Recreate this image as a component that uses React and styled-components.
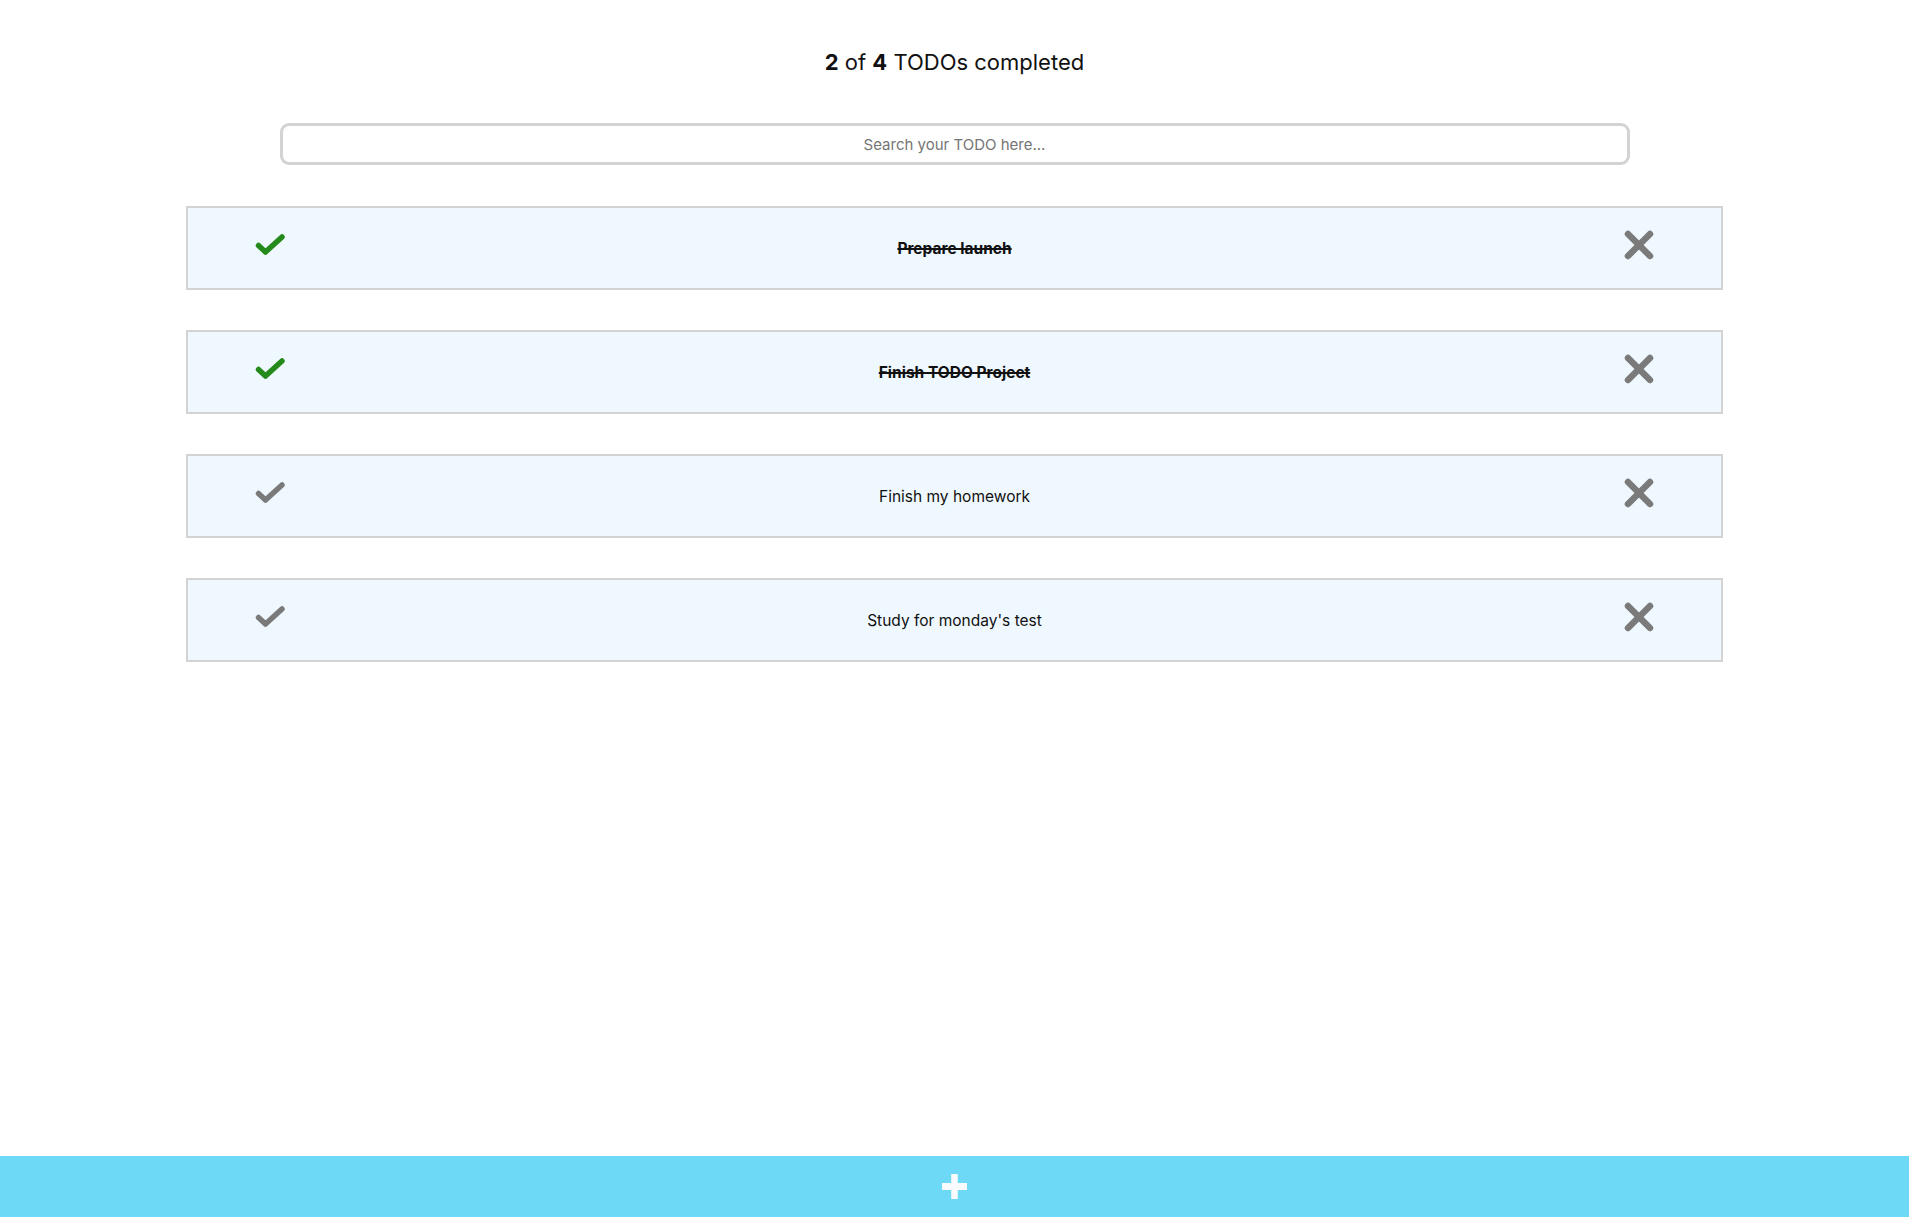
import React, { useState } from "react";
import styled, { createGlobalStyle } from "styled-components";

const GlobalStyle = createGlobalStyle`
  html, body { margin: 0; padding: 0; background: #ffffff; }
  body { font-family: Inter, "Noto Sans", "Liberation Sans", sans-serif; color: #111; }
  * { box-sizing: border-box; }
`;

const Page = styled.div`
  min-height: 1217px;
  padding-bottom: 80px;
`;

const Title = styled.h1`
  margin: 0;
  padding-top: 48px;
  font-size: 22px;
  line-height: 28px;
  font-weight: 400;
  text-align: center;
  color: #111;
  b { font-weight: 700; }
`;

const SearchInput = styled.input`
  display: block;
  margin: 47px auto 0;
  width: 1350px;
  height: 42px;
  border: 3px solid #d3d3d3;
  border-radius: 9px;
  background: #fff;
  text-align: center;
  font-family: Inter, "Noto Sans", "Liberation Sans", sans-serif;
  font-size: 15px;
  color: #333;
  outline: none;
  &::placeholder { color: #757575; }
`;

const List = styled.ul`
  list-style: none;
  margin: 41px auto 0;
  padding: 0;
  width: 1537px;
  display: flex;
  flex-direction: column;
  gap: 40px;
`;

const Item = styled.li`
  display: flex;
  align-items: center;
  height: 84px;
  padding: 0 67px;
  border: 2px solid #d3d3d3;
  background: #f0f8ff;
`;

const IconButton = styled.span`
  width: 30px;
  height: 30px;
  display: flex;
  align-items: center;
  justify-content: center;
  margin-top: -6px;
  cursor: pointer;
  svg { display: block; }
`;

const Text = styled.p`
  flex: 1;
  margin: 2px 0 0;
  text-align: center;
  font-size: 15.5px;
  line-height: 20px;
  color: #111;
  font-weight: ${(p) => (p.$done ? 700 : 400)};
  text-decoration: ${(p) => (p.$done ? "line-through" : "none")};
  text-decoration-thickness: 1.5px;
`;

const Footer = styled.button`
  position: fixed;
  left: 0;
  right: 0;
  bottom: 0;
  height: 61px;
  border: none;
  background: #6ed8f7;
  display: flex;
  align-items: center;
  justify-content: center;
  cursor: pointer;
  padding: 0;
`;

const CheckIcon = ({ done }) => (
  <svg width="30" height="22" viewBox="0 0 30 22">
    <polyline
      points="3.5,11.5 10.5,18 27,3"
      fill="none"
      stroke={done ? "#238a1b" : "#7a7a7a"}
      strokeWidth="5.5"
      strokeLinecap="round"
      strokeLinejoin="round"
    />
  </svg>
);

const CloseIcon = () => (
  <svg width="30" height="30" viewBox="0 0 30 30">
    <g stroke="#7a7a7a" strokeWidth="6.5" strokeLinecap="round">
      <line x1="4" y1="4" x2="26" y2="26" />
      <line x1="26" y1="4" x2="4" y2="26" />
    </g>
  </svg>
);

const PlusIcon = () => (
  <svg width="25" height="25" viewBox="0 0 25 25">
    <rect x="9.2" y="0" width="6.6" height="25" fill="#f9fafb" />
    <rect x="0" y="9" width="25" height="7" fill="#f9fafb" />
  </svg>
);

const initialTodos = [
  { text: "Prepare launch", completed: true },
  { text: "Finish TODO Project", completed: true },
  { text: "Finish my homework", completed: false },
  { text: "Study for monday's test", completed: false },
];

export default function App() {
  const [todos, setTodos] = useState(initialTodos);
  const [search, setSearch] = useState("");
  const completed = todos.filter((t) => t.completed).length;
  const visible = todos.filter((t) =>
    t.text.toLowerCase().includes(search.toLowerCase())
  );

  const toggle = (text) =>
    setTodos((ts) =>
      ts.map((t) => (t.text === text ? { ...t, completed: !t.completed } : t))
    );
  const remove = (text) => setTodos((ts) => ts.filter((t) => t.text !== text));

  return (
    <Page>
      <GlobalStyle />
      <Title>
        <b>{completed}</b> of <b>{todos.length}</b> TODOs completed
      </Title>
      <SearchInput
        placeholder="Search your TODO here..."
        value={search}
        onChange={(e) => setSearch(e.target.value)}
      />
      <List>
        {visible.map((t) => (
          <Item key={t.text}>
            <IconButton onClick={() => toggle(t.text)}>
              <CheckIcon done={t.completed} />
            </IconButton>
            <Text $done={t.completed}>{t.text}</Text>
            <IconButton onClick={() => remove(t.text)}>
              <CloseIcon />
            </IconButton>
          </Item>
        ))}
      </List>
      <Footer aria-label="Add TODO">
        <PlusIcon />
      </Footer>
    </Page>
  );
}
